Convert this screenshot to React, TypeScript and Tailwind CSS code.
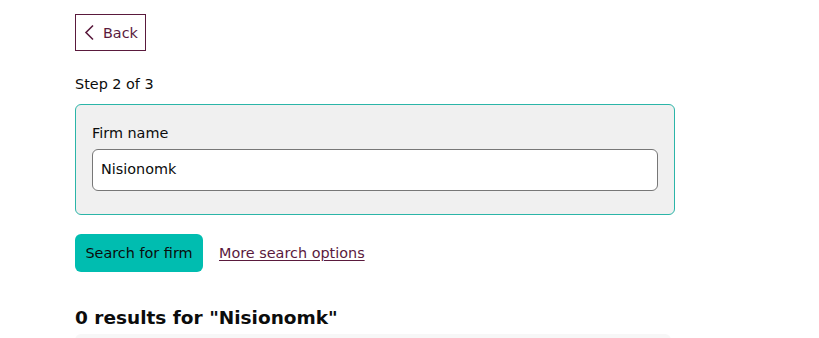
import React from "react";

export default function App() {
  return (
    <div className="min-h-[338px] bg-white text-[#0b0c0c]" style={{ fontFamily: '"DejaVu Sans", Verdana, sans-serif' }}>
      <div className="ml-[75px] w-[600px] pt-[14px]">
        <button className="flex h-[37px] w-[71px] items-center gap-[8px] border border-[#5a1a3d] pl-[8px] text-[14.4px] text-[#5a1a3d]">
          <svg width="11" height="17" viewBox="0 0 11 17" fill="none">
            <path d="M9 1.5L2 8.5L9 15.5" stroke="#5a1a3d" strokeWidth="1.6" />
          </svg>
          <span className="leading-[18px] pt-[1px]">Back</span>
        </button>
        <p className="mt-[24px] text-[14.4px] leading-[18px]">Step 2 of 3</p>
        <div className="mt-[11px] h-[111px] rounded-[6px] border border-[#2bb5a8] bg-[#f0f0f0] px-[16px] pt-[19px]">
          <label className="block text-[14.4px] leading-[18px]">Firm name</label>
          <div className="mt-[7px] flex h-[42px] items-center rounded-[6px] border border-[#777] bg-white px-[8px] text-[14.4px]">
            Nisionomk
          </div>
        </div>
        <div className="mt-[19px] flex items-center gap-[16px]">
          <button className="h-[38px] w-[128px] rounded-[6px] bg-[#00bdb0] pt-[2px] text-[14.4px] text-[#0b0c0c]">Search for firm</button>
          <a href="#" className="pt-[2px] text-[14.4px] text-[#5a1a3d] underline underline-offset-2">More search options</a>
        </div>
        <h2 className="mt-[35px] text-[18.5px] font-bold leading-[22px]">0 results for "Nisionomk"</h2>
        <div className="mt-[5px] h-[10px] w-[596px] rounded-t-[6px] bg-[#f7f7f7]"></div>
      </div>
    </div>
  );
}
